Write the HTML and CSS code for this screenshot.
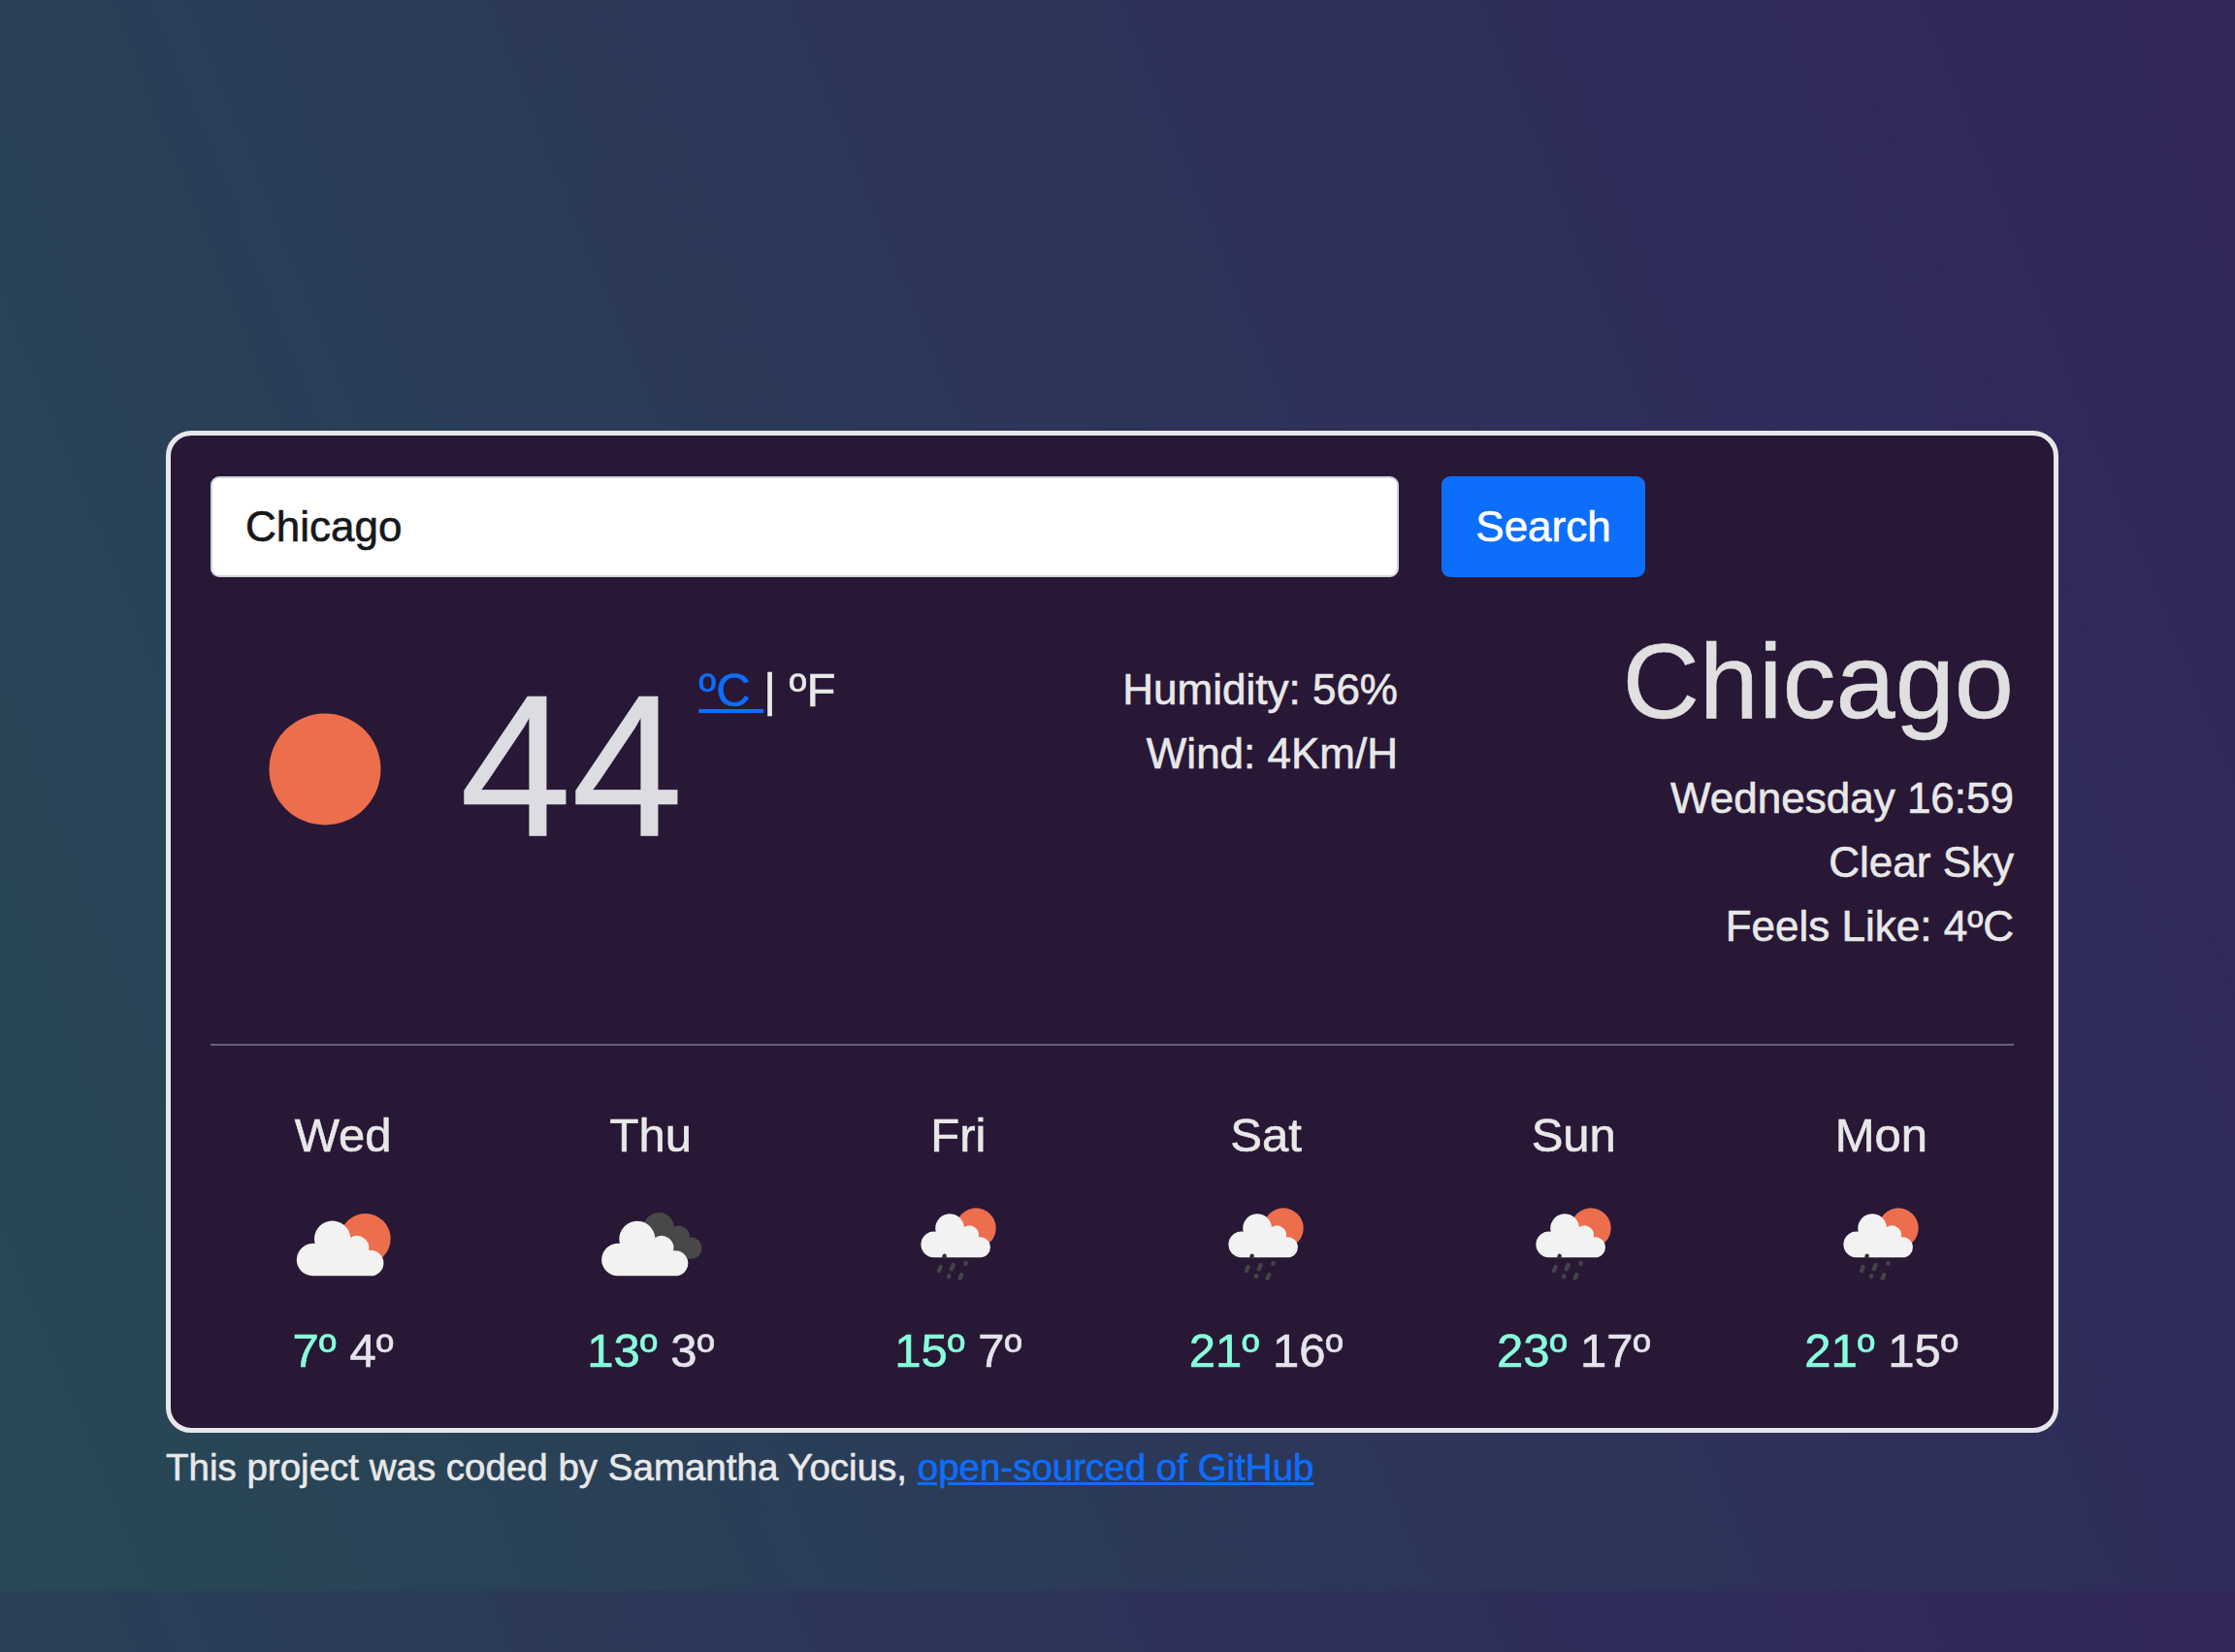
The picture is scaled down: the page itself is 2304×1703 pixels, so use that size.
FILE: index.html
```html
<!DOCTYPE html>
<html lang="en">
<head>
<meta charset="utf-8">
<title>Weather</title>
<link rel="stylesheet" href="styles.css">
</head>
<body>
<svg class="defs" width="0" height="0" aria-hidden="true">
  <symbol id="few-clouds" viewBox="57 324 330 330">
    <circle cx="290" cy="471" r="78" fill="#ec6e4c"/>
    <path fill="#f2f2f0" d="M127 586A50.200 50.200 0 1 1 134 486A56 56 0 1 1 244 468A37 37 0 0 1 300 507A39.800 39.800 0 1 1 305 586Z"/>
  </symbol>
  <symbol id="broken-clouds" viewBox="1008 324 330 330">
    <path fill="#484848" d="M1150 442A46 46 0 0 1 1245 434A33 33 0 0 1 1292 467A33.200 33.200 0 1 1 1297 533L1220 533Z"/>
    <path fill="#f2f2f0" d="M1071 586A50.200 50.200 0 1 1 1077 486A55.500 55.500 0 1 1 1186 468A37 37 0 0 1 1242 508A39.300 39.300 0 1 1 1247 586Z"/>
  </symbol>
  <symbol id="rain" viewBox="100 324 330 330">
    <circle cx="319" cy="438" r="62" fill="#ec6e4c"/>
    <path fill="#f2f2f2" d="M189 529A40.200 40.200 0 1 1 195 449A44.700 44.700 0 1 1 283 435A29 29 0 0 1 327 466A31.700 31.700 0 1 1 332 529Z"/>
    <g fill="none" stroke="#444446" stroke-width="13" stroke-linecap="round">
      <path stroke="#2c2f2e" d="M222 524L221 528"/>
      <path d="M210 558L205 570M249 552L243 565M288 546L287 548M236 586L235 588M275 582L270 593"/>
    </g>
  </symbol>
</svg>
<main class="container">
  <section class="card">
    <form class="search">
      <input class="search-input" type="text" value="Chicago">
      <button class="search-button" type="button">Search</button>
    </form>
    <div class="current">
      <div class="now">
        <svg class="sun" viewBox="0 0 116 116"><circle cx="58" cy="58" r="57.500" fill="#ec6e4c"/></svg>
        <span class="degrees">44</span>
        <span class="units"><a href="#">ºC </a>| ºF</span>
      </div>
      <ul class="stats">
        <li>Humidity: 56%</li>
        <li>Wind: 4Km/H</li>
      </ul>
      <div class="place">
        <h1>Chicago</h1>
        <ul>
          <li>Wednesday 16:59</li>
          <li>Clear Sky</li>
          <li>Feels Like: 4ºC</li>
        </ul>
      </div>
    </div>
    <div class="forecast">
      <div class="day"><span>Wed</span><svg><use href="#few-clouds"/></svg><span><b>7º</b> <i>4º</i></span></div>
      <div class="day"><span>Thu</span><svg><use href="#broken-clouds"/></svg><span><b>13º</b> <i>3º</i></span></div>
      <div class="day"><span>Fri</span><svg><use href="#rain"/></svg><span><b>15º</b> <i>7º</i></span></div>
      <div class="day"><span>Sat</span><svg><use href="#rain"/></svg><span><b>21º</b> <i>16º</i></span></div>
      <div class="day"><span>Sun</span><svg><use href="#rain"/></svg><span><b>23º</b> <i>17º</i></span></div>
      <div class="day"><span>Mon</span><svg><use href="#rain"/></svg><span><b>21º</b> <i>15º</i></span></div>
    </div>
  </section>
  <footer>This project was coded by Samantha Yocius, <a href="#">open-sourced of GitHub</a></footer>
</main>
</body>
</html>
```
FILE: styles.css
```css
* { box-sizing: border-box; }
html {
  height: 1640px;
  background: linear-gradient(68deg, #274955 0%, #2d3459 55%, #2f2c5b 80%, #32265b 98%);
}
body {
  margin: 0;
  font-family: Arial, "Liberation Sans", sans-serif;
  font-size: 44px;
  line-height: 66px;
  color: #e8e8e8;
  -webkit-text-stroke: 0.6px currentColor;
}
a { color: #0d6efd; text-decoration: underline; }
ul { list-style: none; margin: 0; padding: 0; }
.defs { display: block; }
.container { width: 1951px; margin-left: 171px; padding-top: 444px; }
.card {
  height: 1033px;
  padding: 42px 41px 0;
  border: 5px solid #e7e7ea;
  border-radius: 26px;
  background: #281836;
}
.search { display: flex; gap: 44px; height: 104px; }
.search-input {
  width: 1225px;
  padding: 0 34px;
  border: 2px solid #ced4da;
  border-radius: 9px;
  font: inherit;
  color: #16181c;
  background: #fff;
}
.search-button {
  width: 210px;
  padding: 0;
  border: 0;
  border-radius: 9px;
  font: inherit;
  color: #fff;
  background: #0d6efd;
}
.current {
  display: flex;
  height: 483px;
  border-bottom: 2px solid #69607a;
}
.now { display: flex; align-items: flex-start; width: 807px; }
.sun { width: 116px; height: 116px; margin: 140px 0 0 60px; }
.degrees {
  margin: 75px 0 0 81px;
  font-size: 207px;
  line-height: 240px;
  color: #dcdde1;
}
.units { margin: 83px 0 0 16px; font-size: 49px; white-space: pre; }
.stats { width: 417px; padding-top: 83px; text-align: right; }
.place { flex: 1; padding-top: 41px; text-align: right; }
.place h1 {
  margin: 0 0 22px;
  font-size: 110px;
  font-weight: 400;
  line-height: 132px;
  color: #e0e0e0;
}
.forecast {
  display: grid;
  grid-template-columns: repeat(6, 1fr);
  margin: 56px -22px 0 -22px;
  font-size: 49px;
}
.day { display: flex; flex-direction: column; align-items: center; line-height: 72px; }
.day svg { width: 110px; height: 110px; margin: 22px 0 18px; }
.day b { font-weight: 400; color: #88ffdc; }
.day i { font-style: normal; color: #e4e4ea; }
footer { padding-top: 7px; font-size: 38.500px; line-height: 58px; }
```
